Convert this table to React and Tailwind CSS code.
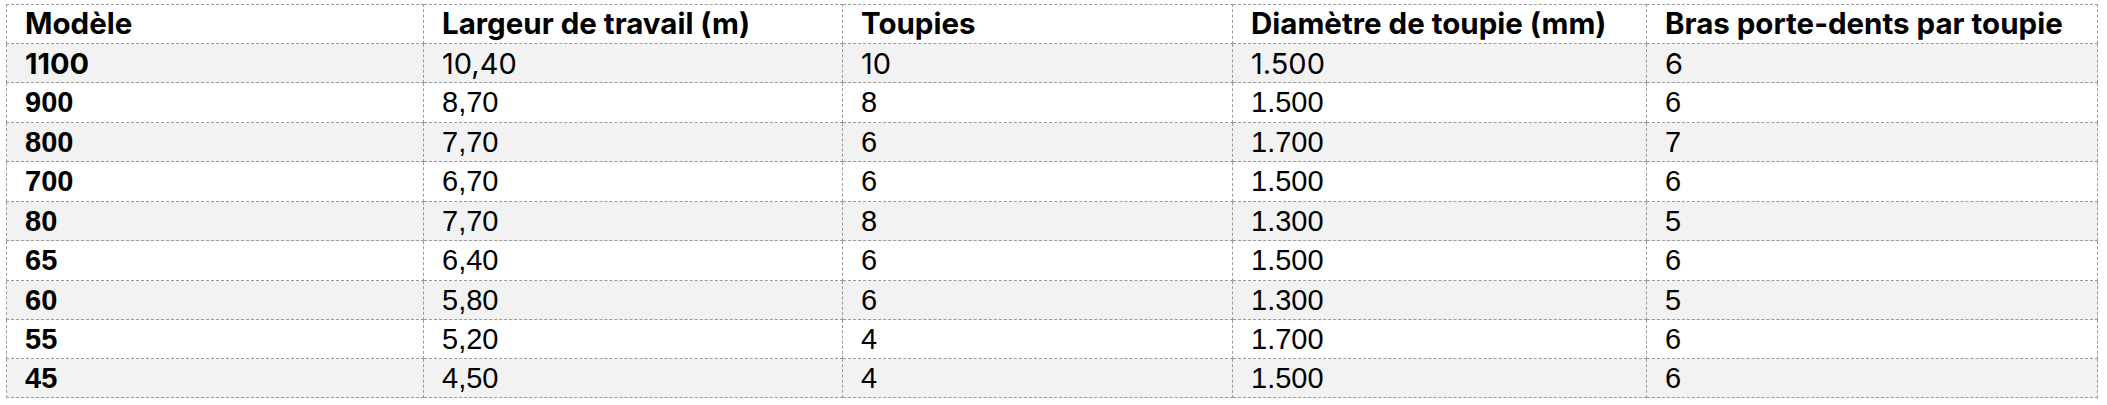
import React from "react";

const header = [
  "Modèle",
  "Largeur de travail (m)",
  "Toupies",
  "Diamètre de toupie (mm)",
  "Bras porte-dents par toupie",
];

const rows = [
  { h: "h-[39px]", c: ["1100", "10,40", "10", "1.500", "6"] },
  { h: "h-[40px]", c: ["900", "8,70", "8", "1.500", "6"] },
  { h: "h-[39px]", c: ["800", "7,70", "6", "1.700", "7"] },
  { h: "h-[40px]", c: ["700", "6,70", "6", "1.500", "6"] },
  { h: "h-[39px]", c: ["80", "7,70", "8", "1.300", "5"] },
  { h: "h-[40px]", c: ["65", "6,40", "6", "1.500", "6"] },
  { h: "h-[39px]", c: ["60", "5,80", "6", "1.300", "5"] },
  { h: "h-[39px]", c: ["55", "5,20", "4", "1.700", "6"] },
  { h: "h-[39px]", c: ["45", "4,50", "4", "1.500", "6"] },
];

export default function App() {
  return (
    <div className="w-[2107px] h-[405px] bg-white pt-[4px] pl-[6px]">
      <table className="border-collapse table-fixed w-[2091px] text-black">
        <colgroup>
          <col className="w-[417px]" />
          <col className="w-[419px]" />
          <col className="w-[390px]" />
          <col className="w-[414px]" />
          <col className="w-[451px]" />
        </colgroup>
        <thead>
          <tr className="h-[39px] bg-white">
            {header.map((h) => (
              <th
                key={h}
                className="border border-dashed border-[#9a9a9a] px-[18px] py-0 text-left align-middle font-bold text-[29.5px] leading-none font-['Inter',sans-serif] whitespace-nowrap"
              >
                {h}
              </th>
            ))}
          </tr>
        </thead>
        <tbody>
          {rows.map((r, i) => (
            <tr
              key={r.c[0]}
              className={`${r.h} ${i % 2 === 0 ? "bg-[#f2f2f2]" : "bg-white"}`}
            >
              {r.c.map((c, j) => (
                <td
                  key={j}
                  className={`border border-dashed border-[#9a9a9a] px-[18px] py-0 text-left align-middle text-[29px] leading-none whitespace-nowrap ${
                    i === 0
                      ? "font-['Inter',sans-serif]"
                      : "font-['Liberation_Sans',Arial,sans-serif]"
                  } ${j === 0 ? "font-bold" : "font-normal"}`}
                >
                  {c}
                </td>
              ))}
            </tr>
          ))}
        </tbody>
      </table>
    </div>
  );
}
